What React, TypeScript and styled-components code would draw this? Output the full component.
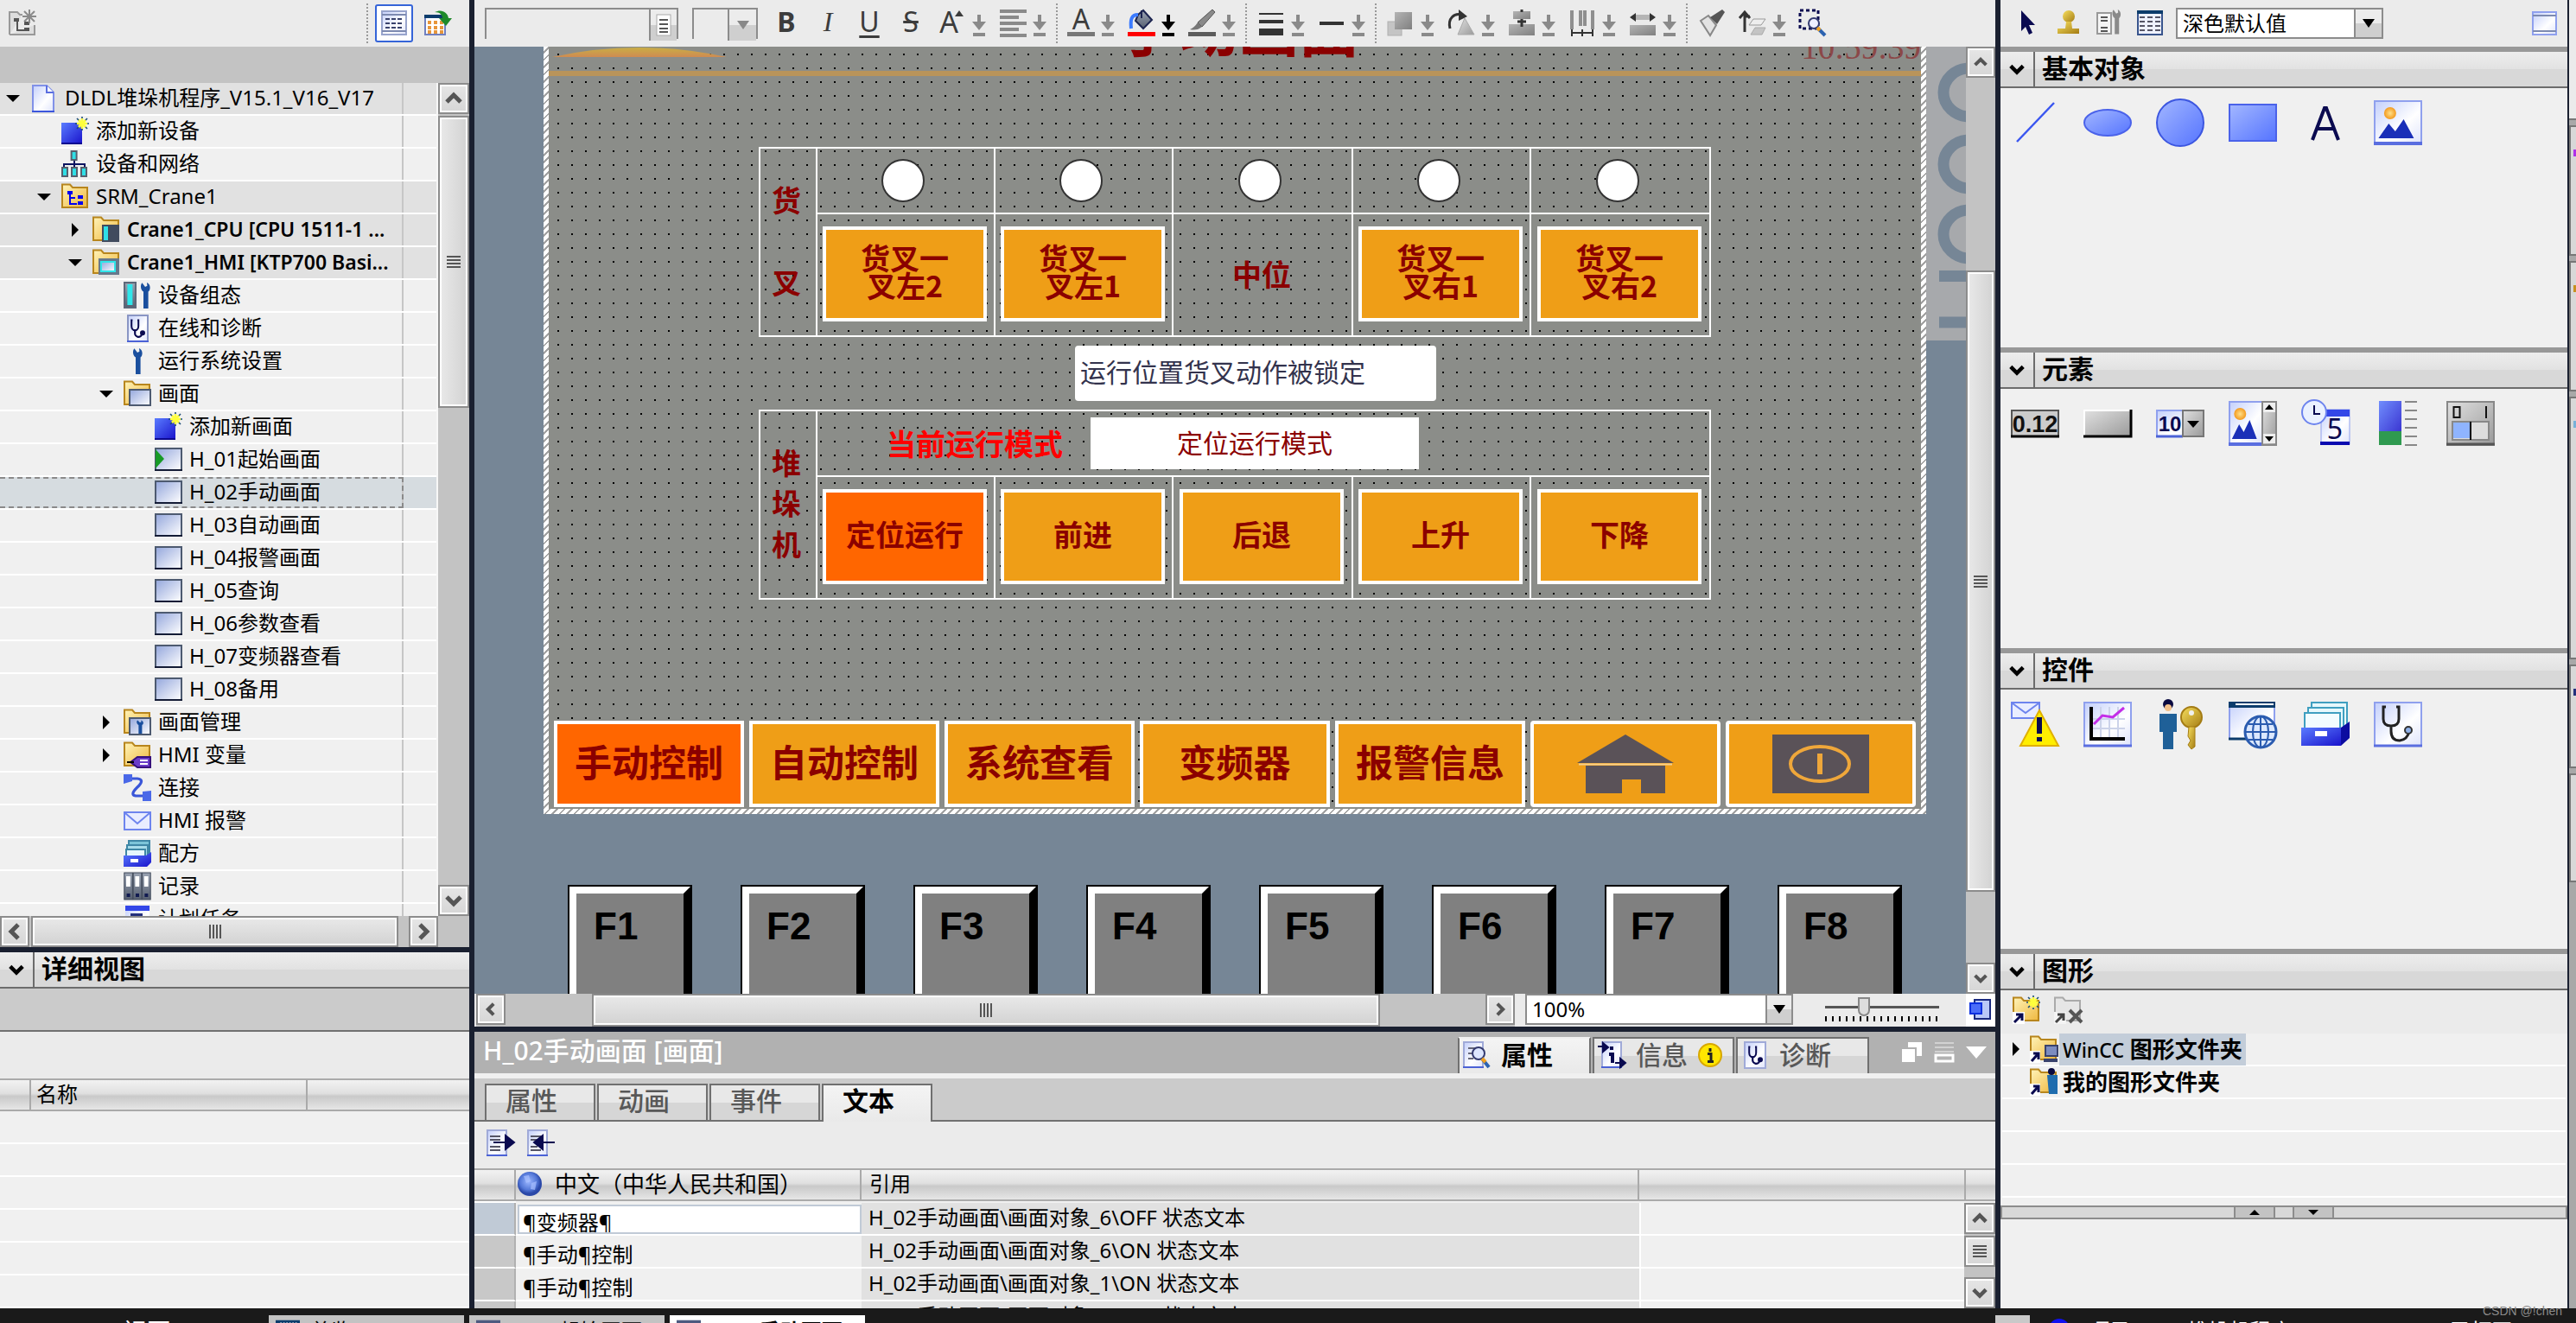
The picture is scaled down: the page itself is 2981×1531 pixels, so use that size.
import React from 'react';
import styled, { createGlobalStyle, css } from 'styled-components';

const Global = createGlobalStyle`
  *, *::before, *::after { box-sizing: border-box; }
  body { margin: 0; overflow: hidden; background: #1a2030; }
  body, button, input, select, table {
    font-family: "Noto Sans", "Noto Sans CJK SC", sans-serif;
    font-size: 24px;
    line-height: 36px;
    color: #000;
  }
  button { border: 0; padding: 0; margin: 0; background: none; }
  h2, ul { margin: 0; padding: 0; font-weight: inherit; }
  svg { display: block; flex: none; overflow: visible; }
`;

/* ---------- shared colours ---------- */
const edge = '#8c8c8c';
const navy = '#1a2030';
const track = '#c3c3c3';
const maroon = '#8b0000';

/* ---------- frame ---------- */
const Shell = styled.div`
  display: flex;
  flex-direction: column;
  height: 100vh;
`;
const Workspace = styled.div`
  flex: 1;
  min-height: 0;
  display: grid;
  grid-template-columns: 543px minmax(0, 1fr) 666px;
  column-gap: 6px;
  background: ${navy};
`;
const Column = styled.section`
  display: flex;
  flex-direction: column;
  min-width: 0;
  min-height: 0;
`;
const Divider = styled.div`
  height: 6px;
  flex: none;
  background: ${navy};
`;
const Bar = styled.div<{ $pad?: string; $h?: number; $gap?: number }>`
  flex: none;
  height: ${p => p.$h || 54}px;
  display: flex;
  align-items: center;
  gap: ${p => p.$gap || 0}px;
  padding: ${p => p.$pad || '0 10px'};
  background: #ebebeb;
`;
const Spacer = styled.div`
  flex: 1;
`;
const IconButton = styled.button<{ $active?: boolean }>`
  display: flex;
  align-items: center;
  justify-content: center;
  flex: none;
  min-width: 32px;
  height: 36px;
  ${p => p.$active && css`
    width: 44px;
    height: 44px;
    background: #fff;
    border: 2px solid #3564d8;
    border-radius: 3px;
  `}
`;
const DotRule = styled.div<{ $gap?: number }>`
  flex: none;
  width: 2px;
  height: 46px;
  margin: 0 ${p => p.$gap ?? 12}px 0 11px;
  background: repeating-linear-gradient(#999 0 2px, transparent 2px 4px);
`;

/* ---------- scroll bars ---------- */
const VBar = styled.div<{ $w?: number }>`
  flex: none;
  width: ${p => p.$w || 36}px;
  display: flex;
  flex-direction: column;
  gap: 2px;
  background: ${track};
`;
const HBar = styled.div`
  flex: 1;
  display: flex;
  gap: 2px;
  background: ${track};
`;
const raised = css`
  border: 2px solid ${edge};
  box-shadow: inset 0 0 0 2px #fff;
  display: flex;
  align-items: center;
  justify-content: center;
`;
const ScrollButton = styled.button`
  ${raised}
  flex: none;
  width: 34px;
  height: 36px;
  background: linear-gradient(#e6e6e6, #d6d6d6);
  ${VBar} & { width: 100%; }
`;
const VThumb = styled.div<{ $grow: number }>`
  ${raised}
  flex: ${p => p.$grow} 0 0;
  background: linear-gradient(90deg, #e9e9e9, #d2d2d2);
`;
const HThumb = styled.div<{ $grow: number }>`
  ${raised}
  flex: ${p => p.$grow} 0 0;
  background: linear-gradient(#e9e9e9, #d2d2d2);
`;
const Rest = styled.div<{ $grow: number }>`
  flex: ${p => p.$grow} 0 0;
`;
const GripV = styled.div`
  width: 16px;
  height: 14px;
  background: repeating-linear-gradient(#555 0 2px, transparent 2px 4px);
`;
const GripH = styled.div`
  width: 14px;
  height: 16px;
  background: repeating-linear-gradient(90deg, #555 0 2px, transparent 2px 4px);
`;
const arrowPath: Record<string, string> = {
  up: 'M2 14L10 6L18 14',
  down: 'M2 6L10 14L18 6',
  left: 'M14 2L6 10L14 18',
  right: 'M6 2L14 10L6 18',
};
const Arrow = ({ dir, color = '#555', size = 20 }: { dir: string; color?: string; size?: number }) => (
  <svg width={size} height={size} viewBox="0 0 20 20">
    <path d={arrowPath[dir]} fill="none" stroke={color} strokeWidth="5" />
  </svg>
);

/* ---------- icons ---------- */
const Defs = styled.svg`
  position: absolute;
`;
const Gradients = () => (
  <Defs width="0" height="0" aria-hidden="true">
    <defs>
      <linearGradient id="page" x1="0" y1="0" x2="1" y2="1"><stop offset="0" stopColor="#c3cffb" /><stop offset=".6" stopColor="#fff" /><stop offset="1" stopColor="#dfe4fb" /></linearGradient>
      <linearGradient id="screen" x1="0" y1="0" x2="1" y2="1"><stop offset="0" stopColor="#93a6dc" /><stop offset="1" stopColor="#fff" /></linearGradient>
      <linearGradient id="folder" x1="0" y1="0" x2="1" y2="1"><stop offset="0" stopColor="#fff3b8" /><stop offset="1" stopColor="#efb83f" /></linearGradient>
      <linearGradient id="blue" x1="0" y1="0" x2="1" y2="1"><stop offset="0" stopColor="#5a7cff" /><stop offset="1" stopColor="#1a14cc" /></linearGradient>
      <linearGradient id="soft" x1="0" y1="0" x2="1" y2="1"><stop offset="0" stopColor="#a3b7ff" /><stop offset="1" stopColor="#5574ff" /></linearGradient>
      <linearGradient id="grey" x1="0" y1="0" x2="1" y2="1"><stop offset="0" stopColor="#e0e0e0" /><stop offset="1" stopColor="#9a9a9a" /></linearGradient>
      <linearGradient id="mid" x1="0" y1="0" x2="1" y2="1"><stop offset="0" stopColor="#b4b4b4" /><stop offset="1" stopColor="#808080" /></linearGradient>
      <linearGradient id="steel" x1="0" y1="0" x2="0" y2="1"><stop offset="0" stopColor="#9ba4b3" /><stop offset="1" stopColor="#565f70" /></linearGradient>
      <linearGradient id="gold" x1="0" y1="0" x2="1" y2="1"><stop offset="0" stopColor="#f7df5e" /><stop offset="1" stopColor="#a47c14" /></linearGradient>
      <radialGradient id="sun"><stop offset="0" stopColor="#ffe08a" /><stop offset="1" stopColor="#f39a1e" /></radialGradient>
      <radialGradient id="globe" cx=".45" cy=".4"><stop offset="0" stopColor="#9db8ff" /><stop offset=".7" stopColor="#5478d8" /><stop offset="1" stopColor="#2a48a8" /></radialGradient>
      <linearGradient id="logo" x1="0" y1="0" x2="0" y2="1"><stop offset="0" stopColor="#c9ae45" /><stop offset="1" stopColor="#cf8b52" /></linearGradient>
    </defs>
  </Defs>
);
const I16 = ({ children, size = 32 }: { children: React.ReactNode; size?: number }) => (
  <svg width={size} height={size} viewBox="0 0 16 16" aria-hidden="true">{children}</svg>
);
const FolderBase = () => (
  <path d="M.5 14V.8H5L6.5 2.5H15V14Z" fill="url(#folder)" stroke="#b8861d" />
);
const wrench = 'M8.2 .6L10 3L11.2 2.4L11 .5C13.4 1.5 13.2 5 11.8 5.8V15.5H9V5.8C7.4 4.8 7 2 8.2 .6Z';
const Steth = () => (
  <g fill="none" stroke="#0a0a50">
    <path d="M5.2 3.2H4.6V6.6A1.9 2.4 0 0 0 8.6 6.6V3.2H8" strokeWidth="1" />
    <path d="M6.6 8.8V10.6A2 2 0 0 0 10.6 11.2" strokeWidth="1.1" />
    <circle cx="11" cy="10.6" r="1" fill="#0a0a50" />
  </g>
);
const Spark = ({ x = 12, y = 3.5 }: { x?: number; y?: number }) => (
  <g transform={`translate(${x} ${y})`}>
    <path d="M0 -4V4M-4 0H4M-3 -3L3 3M3 -3L-3 3" stroke="#1d4d78" strokeWidth=".8" />
    <path d="M0 -3V3M-3 0H3M-2 -2L2 2M2 -2L-2 2" stroke="#ffff3c" strokeWidth="1.3" />
  </g>
);
const TreeIcon = ({ kind }: { kind: string }) => {
  switch (kind) {
    case 'project': return <I16><path d="M2 .5H9.5L13.5 4.5V15.5H1.5V.5Z" fill="url(#page)" stroke="#8191e8" /><path d="M9.5 .5V4.5H13.5" fill="#fff" stroke="#5a6ee0" /><path d="M1 15.5H14" stroke="#3c56dc" /></I16>;
    case 'add': return <I16><rect x="0" y="3" width="12" height="12" fill="url(#blue)" /><path d="M0 15H12" stroke="#0c0890" /><Spark /></I16>;
    case 'network': return <I16><path d="M7.5 5V8M1.5 10V8H13.5V10M7.5 8V10" fill="none" stroke="#0c1460" /><g fill="#2fdfe6" stroke="#55606e"><rect x="5.8" y=".5" width="3" height="5" /><rect x=".5" y="10" width="3" height="5" /><rect x="6" y="10" width="3" height="5" /><rect x="11.5" y="10" width="3" height="5" /></g></I16>;
    case 'plc': return <I16><FolderBase /><g fill="#0000f0"><rect x="3.5" y="4.5" width="3" height="2" /><rect x="9.5" y="7" width="3" height="2" /><rect x="9.5" y="10.5" width="3" height="2" /></g><path d="M5 6V12H9M5 8.5H8" stroke="#0000f0" fill="none" /></I16>;
    case 'cpu': return <I16><FolderBase /><rect x="5.5" y="5" width="10" height="10" fill="#414b5e" /><rect x="6.5" y="6" width="2.5" height="8" fill="#2fdfe6" /></I16>;
    case 'hmi': return <I16><FolderBase /><rect x="3.5" y="5.5" width="12" height="9.5" fill="#66788c" /><rect x="5" y="7.5" width="8" height="5.5" fill="url(#screen)" stroke="#2fe6ea" /></I16>;
    case 'config': return <I16><rect x=".5" y=".5" width="6.5" height="14.5" fill="url(#steel)" stroke="#5d6879" /><rect x="2.2" y="1.5" width="3" height="12" fill="#2fe6ea" /><path d={wrench} transform="translate(2.5 0)" fill="#1a4f9e" /></I16>;
    case 'diag': return <I16><rect x="2.5" y=".5" width="11.5" height="15" fill="url(#page)" stroke="#8a96c4" /><Steth /><path d="M2 15.5H14.5" stroke="#4b62d6" /></I16>;
    case 'wrench': return <I16><path d={wrench} transform="translate(-2 0)" fill="#1a4f9e" /></I16>;
    case 'screens': return <I16><FolderBase /><rect x="3.5" y="5.5" width="12" height="9" fill="url(#screen)" stroke="#4d5a70" /></I16>;
    case 'start': return <I16><rect x=".5" y="1.5" width="15" height="12.5" fill="url(#screen)" stroke="#4d5a70" /><path d="M.5 2L5.5 7.5L.5 13Z" fill="#179a26" /><path d="M0 14H16" stroke="#141c36" /></I16>;
    case 'screen': return <I16><rect x=".5" y="1.5" width="15" height="12.5" fill="url(#screen)" stroke="#4d5a70" /><path d="M0 14H16" stroke="#141c36" /></I16>;
    case 'manage': return <I16><FolderBase /><rect x="3.5" y="5.5" width="12" height="9.5" fill="url(#screen)" stroke="#4d5a70" /><path d={wrench} transform="translate(2.2 6.5) scale(.72 .52)" fill="#1a4f9e" /></I16>;
    case 'tags': return <I16><FolderBase /><path d="M4 12L8 9H15.5V15H8Z" fill="#6a3cc8" stroke="#36107c" /><path d="M9.5 11H14M9.5 13H14" stroke="#fff" /><path d="M2 12H6" stroke="#000" /></I16>;
    case 'conn': return <I16><path d="M4 2.5H8Q12 3 9 6.5Q3 12 7 12.5H11" fill="none" stroke="#3a56d8" strokeWidth="1.6" /><path d="M0 0H5V4L0 5.5ZM11 10L16 9.5V15.5H11Z" fill="#4a68e8" /></I16>;
    case 'mail': return <I16><rect x=".5" y="3" width="15" height="10" fill="#e9edff" stroke="#6d84ee" /><path d="M1 3.5L8 9.5L15 3.5" fill="none" stroke="#6d84ee" /></I16>;
    case 'recipe': return <I16><path d="M3 .5H15V9H3Z" fill="#7cc4d8" stroke="#3f87a6" /><path d="M2 3H14V10H2Z" fill="#a7dcea" stroke="#3f87a6" /><path d="M1.5 5.5H12.5V10H1.5Z" fill="#e6f8fc" stroke="#3f87a6" /><path d="M0 9H13L16 7V13L13.5 15.5H0Z" fill="url(#blue)" /><rect x="4" y="11" width="4.5" height="2" fill="#fff" /></I16>;
    case 'log': return <I16>{[0, 5.2, 10.4].map(x => <g key={x}><rect x={x + .4} y="0" width="4.8" height="15.5" fill="url(#steel)" stroke="#3d4658" strokeWidth=".5" /><rect x={x + 1.5} y="2" width="2.4" height="6" fill="#fff" /><rect x={x + 1.8} y="12" width="2" height="2" fill="#101a50" /></g>)}</I16>;
    case 'task': return <I16><rect x="1" y="0" width="14" height="16" fill="url(#page)" /><rect x="1" y="0" width="14" height="3" fill="#3347e8" /><path d="M5 16V5.5H10V16" fill="none" stroke="#24307c" strokeWidth="2" /></I16>;
    default: return null;
  }
};
const Page = ({ children }: { children?: React.ReactNode }) => (
  <><rect x=".5" y=".5" width="11" height="14.5" fill="url(#page)" stroke="#a0aad8" /><path d="M0 15H12" stroke="#4b62d6" />{children}</>
);

/* ---------- project tree ---------- */
const Strip = styled.div<{ $h: number; $bg: string; $line?: boolean }>`
  flex: none;
  height: ${p => p.$h}px;
  background: ${p => p.$bg};
  ${p => p.$line && 'border-bottom: 2px solid #707070;'}
`;
const TreeArea = styled.div`
  flex: 1;
  min-height: 0;
  display: flex;
  background: #f0f0f0;
`;
const Tree = styled.ul`
  flex: 1;
  min-width: 0;
  overflow: hidden;
  list-style: none;
  border-right: 2px solid #f7f7f7;
`;
const TreeRow = styled.li<{ $level: number; $dark?: boolean; $sel?: boolean; $bold?: boolean }>`
  position: relative;
  display: grid;
  grid-template-columns: 35px 32px minmax(0, 1fr) 40px;
  align-items: center;
  height: 38px;
  padding-left: ${p => p.$level * 36}px;
  border-bottom: 2px solid #fff;
  background: ${p => (p.$dark ? '#e1e1e1' : p.$sel ? '#d6dce0' : '#f0f0f0')};
  ${p => p.$sel && css`
    &::after {
      content: '';
      position: absolute;
      inset: 0 38px 0 0;
      border: 2px dashed #8a8a8a;
      border-left: 0;
    }
  `}
  ${p => p.$bold && css`font-weight: 600; font-size: 23px;`}
`;
const Twist = styled.span`
  display: flex;
  justify-content: center;
  padding-right: 5px;
`;
const TreeLabel = styled.span`
  height: 36px;
  padding-left: 8px;
  line-height: 34px;
  white-space: nowrap;
  overflow: hidden;
`;
const TreeEnd = styled.span`
  height: 36px;
  border-left: 2px solid #c6c6c6;
`;
const HRow = styled.div`
  flex: none;
  display: flex;
  height: 36px;
  background: ${track};
`;
const Corner = styled.div`
  width: 36px;
  flex: none;
`;
const Triangle = ({ open }: { open?: boolean }) => (
  <svg width="16" height="16" viewBox="0 0 16 16"><path d={open ? 'M0 4H16L8 12Z' : 'M4 0V16L12 8Z'} /></svg>
);
type Node = { l: number; k: string; t: string; o?: boolean; c?: boolean; d?: boolean; b?: boolean; s?: boolean };
const nodes: Node[] = [
  { l: 0, k: 'project', t: 'DLDL堆垛机程序_V15.1_V16_V17', o: true, d: true },
  { l: 1, k: 'add', t: '添加新设备' },
  { l: 1, k: 'network', t: '设备和网络' },
  { l: 1, k: 'plc', t: 'SRM_Crane1', o: true, d: true },
  { l: 2, k: 'cpu', t: 'Crane1_CPU [CPU 1511-1 ...', c: true, d: true, b: true },
  { l: 2, k: 'hmi', t: 'Crane1_HMI [KTP700 Basi...', o: true, d: true, b: true },
  { l: 3, k: 'config', t: '设备组态' },
  { l: 3, k: 'diag', t: '在线和诊断' },
  { l: 3, k: 'wrench', t: '运行系统设置' },
  { l: 3, k: 'screens', t: '画面', o: true },
  { l: 4, k: 'add', t: '添加新画面' },
  { l: 4, k: 'start', t: 'H_01起始画面' },
  { l: 4, k: 'screen', t: 'H_02手动画面', s: true },
  { l: 4, k: 'screen', t: 'H_03自动画面' },
  { l: 4, k: 'screen', t: 'H_04报警画面' },
  { l: 4, k: 'screen', t: 'H_05查询' },
  { l: 4, k: 'screen', t: 'H_06参数查看' },
  { l: 4, k: 'screen', t: 'H_07变频器查看' },
  { l: 4, k: 'screen', t: 'H_08备用' },
  { l: 3, k: 'manage', t: '画面管理', c: true },
  { l: 3, k: 'tags', t: 'HMI 变量', c: true },
  { l: 3, k: 'conn', t: '连接' },
  { l: 3, k: 'mail', t: 'HMI 报警' },
  { l: 3, k: 'recipe', t: '配方' },
  { l: 3, k: 'log', t: '记录' },
  { l: 3, k: 'task', t: '计划任务' },
];

/* ---------- section headers ---------- */
const Section = styled.header<{ $bar?: boolean }>`
  flex: none;
  display: flex;
  height: ${p => (p.$bar ? 48 : 42)}px;
  border-top: ${p => (p.$bar ? 6 : 0)}px solid #989898;
  border-bottom: 2px solid #6c6c6c;
  background: linear-gradient(#ededed 0, #e2e2e2 50%, #d8d8d8 50%, #d8d8d8 100%);
`;
const Fold = styled.button`
  width: 40px;
  display: flex;
  align-items: center;
  justify-content: center;
  border-right: 2px solid #6c6c6c;
`;
const SectionTitle = styled.h2`
  font-size: 30px;
  line-height: 38px;
  font-weight: 700;
  padding-left: 8px;
`;
const Head = ({ title, bar }: { title: string; bar?: boolean }) => (
  <Section $bar={bar}>
    <Fold aria-label={title}><Arrow dir="down" color="#000" size={18} /></Fold>
    <SectionTitle>{title}</SectionTitle>
  </Section>
);

/* ---------- data tables ---------- */
const headFill = 'linear-gradient(#f2f2f2, #e0e0e0 45%, #c9c9c9 55%, #e6e6e6)';
const Grid = styled.table`
  flex: 1;
  min-width: 0;
  width: 100%;
  table-layout: fixed;
  border-collapse: separate;
  border-spacing: 0;
  th, td { padding: 0 0 0 9px; text-align: left; white-space: nowrap; overflow: hidden; }
  th {
    height: 38px;
    font-weight: 400;
    line-height: 32px;
    padding-bottom: 2px;
    background: ${headFill};
    border: 2px solid #aaa;
    border-left: 0;
  }
  th:last-child { border-right: 0; }
  td { height: 38px; border-bottom: 2px solid #fff; background: #f0f0f0; }
`;
const DetailGrid = styled(Grid)`
  flex: none;
  th:nth-child(2) { padding-left: 6px; }
`;
const Clip = styled.div`
  flex: none;
  height: 266px;
  overflow: hidden;
  background: #f0f0f0;
`;

/* ---------- format tool bar ---------- */
const Combo = styled.div<{ $w: number; $btn: number }>`
  flex: none;
  display: grid;
  grid-template-columns: minmax(0, 1fr) ${p => p.$btn}px;
  width: ${p => p.$w}px;
  height: 36px;
  border: 2px solid ${edge};
`;
const ComboPair = styled.div`
  display: flex;
  gap: 16px;
`;
const ComboInput = styled.input`
  width: 100%;
  border: 0;
  border-right: 2px solid ${edge};
  background: #ebebeb;
  padding: 0 4px;
`;
const ComboSelect = styled.select`
  appearance: none;
  width: 100%;
  border: 0;
  border-right: 2px solid ${edge};
  border-radius: 0;
  background: #fff;
  padding: 0 6px;
  line-height: 30px;
  outline: 0;
`;
const ComboButton = styled.button`
  display: flex;
  align-items: center;
  justify-content: center;
  background: linear-gradient(#ececec 50%, #cfcfcf 50%);
`;
const Down = ({ color = '#000', size = 14 }: { color?: string; size?: number }) => (
  <svg width={size} height="10" viewBox="0 0 14 10"><path d="M0 0H14L7 10Z" fill={color} /></svg>
);
const Letters = styled.div`
  display: flex;
  gap: 16px;
  margin: 0 16px 0 17px;
`;
const Letter = styled(IconButton)<{ $kind: string }>`
  width: 32px;
  font-size: 32px;
  line-height: 36px;
  padding-bottom: 4px;
  color: #3c3c3c;
  ${p => p.$kind === 'B' && 'font-weight: 700;'}
  ${p => p.$kind === 'I' && 'font-family: "Liberation Serif", serif; font-style: italic;'}
  ${p => p.$kind === 'U' && 'text-decoration: underline; text-underline-offset: 4px;'}
  ${p => p.$kind === 'S' && 'text-decoration: line-through;'}
`;
const ToolGroup = styled.div`
  display: flex;
  gap: 15px;
`;
const Tool = styled.button`
  display: flex;
  align-items: center;
  gap: 7px;
`;
const More = ({ color = '#8a8a8a' }: { color?: string }) => (
  <svg width="16" height="32" viewBox="0 0 16 32"><path d="M6 6H10V14H16L8 24L0 14H6ZM1 27H15V31H1Z" fill={color} /></svg>
);
const T = ({ children }: { children: React.ReactNode }) => (
  <svg width="32" height="32" viewBox="0 0 32 32" aria-hidden="true">{children}</svg>
);
const glyphA = (size: number, x: number, y: number, fill = '#3c3c3c') => (
  <text x={x} y={y} fontSize={size} fill={fill} fontFamily="Noto Sans, sans-serif" textAnchor="middle">A</text>
);
const toolIcons: Record<string, React.ReactNode> = {
  grow: <T>{glyphA(34, 12, 27)}<path d="M19 8L24 1L29 8Z" fill="#3c3c3c" /></T>,
  align: <T>{[1, 8, 15, 22, 29].map((y, i) => <rect key={y} x="1" y={y - 1} width={i % 2 ? 22 : 31} height="4" fill="#8a8a8a" />)}</T>,
  color: <T>{glyphA(32, 16, 23)}<rect x="0" y="26" width="32" height="5" fill="#777" /></T>,
  fill: <T><path d="M12 6L18 1L28 12L18 22L9 13Z" fill="url(#steel)" stroke="#1c2450" strokeWidth="2" /><path d="M12 6C4 6 3 12 4 22" fill="none" stroke="#3b7bff" strokeWidth="4" /><path d="M16 10V1" stroke="#1c2450" strokeWidth="2" /><rect x="0" y="26" width="32" height="5" fill="#f00" /></T>,
  pen: <T><path d="M28 0L31 3L16 20L11 15Z" fill="#8a8a8a" stroke="#555" /><path d="M11 15L16 20Q10 25 2 23Q7 21 11 15Z" fill="#777" /><rect x="0" y="26" width="32" height="5" fill="#5c5c5c" /></T>,
  width: <T><path d="M2 5H30" stroke="#333" strokeWidth="2" /><path d="M2 14H30" stroke="#333" strokeWidth="4" /><path d="M2 26H30" stroke="#333" strokeWidth="8" /></T>,
  style: <T><path d="M2 16H30" stroke="#333" strokeWidth="4" /></T>,
  order: <T><rect x="1" y="14" width="16" height="16" fill="#c4c4c4" stroke="#b0b0b0" /><rect x="9" y="3" width="20" height="20" fill="url(#mid)" /></T>,
  rotate: <T><path d="M3 22C0 10 8 4 16 6" fill="none" stroke="#333" strokeWidth="3" /><path d="M13 0L23 8L13 13Z" fill="#333" /><path d="M20 10L31 29H12Z" fill="url(#grey)" stroke="#aaa" /></T>,
  center: <T><rect x="6" y="2" width="20" height="9" fill="url(#mid)" /><rect x="1" y="17" width="30" height="13" fill="url(#mid)" /><path d="M16 0V3M11 14H21M16 11V20" stroke="#333" strokeWidth="3" /></T>,
  spread: <T><path d="M4 1V23M14 1V19M19 1V19M28 1V23" stroke="#8f8f8f" strokeWidth="4" /><path d="M3 27H29M4 23V31M16 23V31M28 23V31" stroke="#333" strokeWidth="2" /></T>,
  size: <T><path d="M1 9L8 4V14ZM31 9L24 4V14Z" fill="#333" /><rect x="8" y="6" width="16" height="6" fill="#b5b5b5" /><rect x="1" y="18" width="30" height="12" fill="url(#mid)" /></T>,
  brush: <T><path d="M3 13L12 7L21 18L14 30Z" fill="#e2e2e2" stroke="#888" strokeWidth="2" /><path d="M28 0L31 3L22 17L14 9Z" fill="#555" /></T>,
  layer: <T><path d="M7 4V26M1 10L7 3L13 10M7 8H13" fill="none" stroke="#333" strokeWidth="3" /><path d="M17 11H31L26 18H12Z" fill="#eee" stroke="#999" /><path d="M19 21H31L27 29H14Z" fill="#c4c4c4" stroke="#aaa" /></T>,
  region: <T><rect x="1" y="1" width="21" height="21" fill="none" stroke="#0a0a50" strokeWidth="3" strokeDasharray="4 3" /><circle cx="17" cy="16" r="6" fill="#eef" stroke="#333a70" strokeWidth="2" /><path d="M21 21L30 30" stroke="#2b62b0" strokeWidth="4" /><path d="M21 21L24 24" stroke="#f0a020" strokeWidth="4" /></T>,
};
const ToolSet = ({ names, dark }: { names: string[]; dark?: string }) => (
  <ToolGroup>
    {names.map(n => (
      <Tool key={n} aria-label={n}>{toolIcons[n]}<More color={n === dark ? '#000' : undefined} /></Tool>
    ))}
  </ToolGroup>
);

/* ---------- operator panel ---------- */
const CanvasRow = styled.div`
  flex: 1;
  min-height: 0;
  display: flex;
`;
const Canvas = styled.div`
  flex: 1;
  min-width: 0;
  display: flex;
  flex-direction: column;
  overflow: hidden;
  background: #768696;
`;
const PanelRow = styled.div`
  flex: none;
  display: flex;
  padding-left: 80px;
  height: 888px;
`;
const Hatch = styled.div`
  flex: 1;
  min-width: 0;
  display: flex;
  padding: 0 6px 6px;
  background: repeating-linear-gradient(135deg, #fff 0 4px, #a2a2a2 4px 6px);
`;
const Panel = styled.div`
  flex: 1;
  min-width: 0;
  display: flex;
  flex-direction: column;
  align-items: center;
  background-color: #8b8d89;
  background-image: conic-gradient(from 0deg at 2px 2px, transparent 270deg, #000 0);
  background-size: 16px 16px;
  background-position: 10px 8px;
  font-family: "Noto Sans CJK SC", sans-serif;
`;
const PanelTop = styled.div`
  align-self: stretch;
  flex: none;
  height: 28px;
  overflow: hidden;
  display: grid;
  grid-template-columns: 1fr auto 1fr;
  grid-template-rows: 28px;
  align-items: end;
  padding-left: 4px;
`;
const PanelTitle = styled.div`
  font-size: 70px;
  line-height: 68px;
  font-weight: 700;
  color: ${maroon};
  padding: 0 0 18px 4px;
`;
const Clock = styled.div`
  justify-self: end;
  font-family: "Liberation Serif", serif;
  font-size: 39px;
  line-height: 38px;
  color: #8b4848;
  padding-bottom: 8px;
`;
const LogoArc = styled.div`
  align-self: start;
`;
const Rule = styled.div`
  align-self: stretch;
  flex: none;
  height: 6px;
  background: #b9945a;
  margin-bottom: 82px;
`;
const Block = styled.div`
  flex: none;
  display: grid;
  grid-template-columns: 66px minmax(0, 1fr);
  width: 1102px;
  height: 220px;
  border: 2px solid #fff;
`;
const SideLabel = styled.div<{ $gap: number }>`
  display: flex;
  flex-direction: column;
  align-items: center;
  justify-content: center;
  gap: ${p => p.$gap}px;
  border-right: 2px solid #fff;
  padding: 0 4px 4px 0;
  font-size: 34px;
  line-height: 34px;
  font-weight: 700;
  color: ${maroon};
`;
const Cells = styled.div`
  display: grid;
  grid-template-columns: 204fr 206fr 208fr 206fr 208fr;
  grid-template-rows: 76px 140px;
`;
const Cell = styled.div<{ $top?: boolean }>`
  display: flex;
  align-items: center;
  justify-content: center;
  border-left: 2px solid #fff;
  border-bottom: ${p => (p.$top ? '2px solid #fff' : '0')};
  padding: ${p => (p.$top ? '0 6px 0 0' : '0 2px 2px 0')};
  font-size: 34px;
  line-height: 32px;
  font-weight: 700;
  color: ${maroon};
  &:nth-child(5n + 1) { border-left: 0; }
`;
const ModeCell = styled.div`
  grid-column: 1 / -1;
  display: flex;
  align-items: center;
  border-bottom: 2px solid #fff;
  padding-left: 80px;
`;
const ModeCells = styled(Cells)`
  ${Cell}:nth-child(2) { border-left: 0; }
  ${Cell}:nth-child(6) { border-left: 2px solid #fff; }
`;
const ModeLabel = styled.label`
  width: 236px;
  font-size: 34px;
  font-weight: 700;
  color: #f00;
`;
const ModeValue = styled.output`
  width: 380px;
  height: 60px;
  background: #fff;
  font-size: 30px;
  line-height: 56px;
  text-align: center;
  color: ${maroon};
`;
const Lamp = styled.span`
  width: 50px;
  height: 50px;
  border-radius: 50%;
  background: #fff;
  border: 2px solid #333;
`;
const HmiButton = styled.button<{ $on?: boolean; $round?: boolean }>`
  border: 4px solid #fff;
  border-radius: ${p => (p.$round ? 4 : 0)}px;
  background: ${p => (p.$on ? '#ff6600' : '#ef9e17')};
  color: ${maroon};
  font-family: "Noto Sans CJK SC", sans-serif;
  font-weight: 700;
  display: flex;
  align-items: center;
  justify-content: center;
`;
const CellButton = styled(HmiButton)`
  width: 190px;
  height: 110px;
  font-size: 34px;
  line-height: 32px;
  padding: 0 38px 6px;
  ${ModeCells} & { padding: 0 0 6px; }
`;
const MessageRow = styled.div`
  flex: none;
  width: 1102px;
  padding: 10px 0 10px 366px;
`;
const Message = styled.output`
  display: block;
  width: 418px;
  border-radius: 4px;
  background: #fff;
  color: #33334d;
  font-size: 30px;
  line-height: 58px;
  height: 64px;
  padding-left: 6px;
`;
const NavRow = styled.div`
  align-self: stretch;
  margin-top: auto;
  display: grid;
  grid-template-columns: repeat(7, minmax(0, 1fr));
  gap: 6px;
  padding: 0 6px 2px;
`;
const NavButton = styled(HmiButton)`
  height: 100px;
  font-size: 43px;
  line-height: 48px;
  padding-bottom: ${p => (p.$round ? 0 : 8)}px;
`;
const Bezel = styled.div`
  flex: none;
  width: 46px;
  height: 340px;
  overflow: hidden;
  background: #a7a9ac;
`;
const KeyRow = styled.div`
  flex: 1;
  min-height: 0;
  display: grid;
  grid-template-columns: repeat(8, minmax(0, 1fr));
  padding: 82px 18px 0 108px;
`;
const KeyCap = styled.button`
  width: 144px;
  height: 140px;
  border: 2px solid #000;
  display: flex;
`;
const KeyFace = styled.span`
  flex: 1;
  align-self: stretch;
  border: 8px solid;
  border-color: #fff #000 #000 #fff;
  background: #808080;
  font: 700 44px/44px "Liberation Sans", sans-serif;
  text-align: left;
  padding: 16px 0 0 20px;
`;
const LogoSvg = () => (
  <svg width="202" height="12" viewBox="0 0 202 12"><path d="M0 12Q100 -10 202 12Z" fill="url(#logo)" /></svg>
);
const House = () => (
  <svg width="112" height="68" viewBox="0 0 112 68"><g fill="#5a5258"><path d="M56 0L112 33H0Z" /><path d="M10 36H102V68H74V52H52V68H10Z" /></g><path d="M2 34.500H110" stroke="#f6cf8e" strokeWidth="2" /></svg>
);
const Power = () => (
  <svg width="112" height="68" viewBox="0 0 112 68"><rect width="112" height="68" fill="#5a5258" /><ellipse cx="55" cy="34" rx="34" ry="20" fill="none" stroke="#efa73a" strokeWidth="4" /><rect x="52" y="22" width="6" height="24" fill="#efa73a" /></svg>
);
const BezelArt = () => (
  <svg width="46" height="340" viewBox="0 0 46 340"><g fill="none" stroke="#768696" strokeWidth="13">{[53, 136, 217].map(y => <ellipse key={y} cx="50" cy={y} rx="30" ry="28" />)}<path d="M15 265.500H46M15 319H46" /></g></svg>
);

/* ---------- canvas footer ---------- */
const Footer = styled.div`
  flex: none;
  display: flex;
  height: 38px;
  padding-left: 2px;
  background: #ebebeb;
`;
const ZoomCombo = styled(Combo)`
  margin-left: 12px;
`;
const ZoomBox = styled.div`
  width: 200px;
  display: flex;
  flex-direction: column;
  align-items: center;
  padding-left: 6px;
`;
const Range = styled.input`
  appearance: none;
  width: 132px;
  height: 26px;
  margin: 2px 0 0;
  background: linear-gradient(#555, #555) 0 12px / 100% 3px no-repeat;
  &::-webkit-slider-thumb {
    appearance: none;
    width: 14px;
    height: 22px;
    background: #ddd;
    border: 2px solid #888;
    border-radius: 0 0 7px 7px;
  }
`;
const Ticks = styled.div`
  width: 132px;
  height: 6px;
  margin-top: -2px;
  background: repeating-linear-gradient(90deg, #000 0 2px, transparent 2px 8px);
`;
const Fit = styled(IconButton)`
  width: 34px;
  height: 38px;
  background: #fff;
`;

/* ---------- inspector ---------- */
const InspectorHead = styled.div`
  flex: none;
  display: flex;
  align-items: flex-end;
  height: 54px;
  padding: 0 6px 0 10px;
  border-bottom: 6px solid #f0f0f0;
  background: #b1b1b1;
`;
const InspectorTitle = styled.h2`
  flex: 1;
  color: #fff;
  font-size: 30px;
  line-height: 40px;
  padding-bottom: 6px;
  font-weight: 500;
`;
const tabFace = css<{ $on?: boolean }>`
  display: flex;
  align-items: center;
  height: 42px;
  font-size: 30px;
  line-height: 36px;
  border: 2px solid #707070;
  border-bottom: 0;
  font-weight: ${p => (p.$on ? 700 : 500)};
  color: ${p => (p.$on ? '#000' : '#585858')};
  background: ${p => (p.$on ? 'linear-gradient(#f4f4f4, #e9e9e9)' : 'linear-gradient(#e8e8e8 50%, #d6d6d6 50%)')};
`;
const TopTab = styled.button<{ $on?: boolean; $w: number; $gap?: number }>`
  ${tabFace}
  width: ${p => p.$w}px;
  gap: ${p => p.$gap || 12}px;
  padding: 0 0 2px 4px;
  margin-right: 2px;
  ${p => p.$on && 'border-top-color: #f0f0f0;'}
`;
const WindowTools = styled.div`
  display: flex;
  gap: 5px;
  margin: 0 0 6px 32px;
`;
const SubTabs = styled.div`
  flex: none;
  display: flex;
  align-items: flex-end;
  gap: 2px;
  height: 50px;
  padding-left: 12px;
  background: linear-gradient(#707070, #707070) 0 100% / 100% 2px no-repeat #cbcbcb;
`;
const SubTab = styled.button<{ $on?: boolean }>`
  ${tabFace}
  width: 128px;
  margin-bottom: ${p => (p.$on ? 0 : 2)}px;
  height: ${p => (p.$on ? 44 : 42)}px;
  padding: 0 0 ${p => (p.$on ? 6 : 4)}px 22px;
`;
const TableArea = styled.div`
  flex: none;
  display: flex;
  align-items: flex-start;
  height: 162px;
  overflow: hidden;
  background: #f0f0f0;
`;
const TextGrid = styled(Grid)`
  tbody::before { content: ''; display: block; height: 2px; background: #fff; }
  td:first-child { background: #c8c8c8; border-right: 2px solid #b0b0b0; }
  tr:first-child td:first-child { background: #c0cad6; }
  td:nth-child(2) { padding: 8px 0 0 8px; line-height: 28px; }
  td:nth-child(3) { background: #e1e1e1; line-height: 32px; padding: 0 0 2px 8px; }
  td:last-child { border-left: 2px solid #fff; }
  tbody tr:first-child td:nth-child(2) { padding: 2px 0 0 2px; }
`;
const LangHead = styled.span`
  display: flex;
  align-items: center;
  gap: 14px;
  font-size: 26px;
  margin-left: -8px;
`;
const CellInput = styled.input`
  display: block;
  width: 100%;
  height: 34px;
  padding: 4px 0 0 4px;
  border: 2px solid #c0cad6;
  background: #fff;
  line-height: 26px;
`;
const ScrollSide = styled.div`
  flex: none;
  width: 36px;
  height: 162px;
  display: flex;
  flex-direction: column;
  gap: 2px;
`;
const ScrollCap = styled.div`
  flex: none;
  height: 38px;
  background: ${headFill};
  border: 2px solid #aaa;
  border-right: 0;
`;

/* ---------- toolbox ---------- */
const Palette = styled.div`
  flex: none;
  display: flex;
  align-items: flex-start;
  gap: 28px;
  height: 300px;
  padding: 12px;
  background: #f0f0f0;
`;
const PaletteItem = styled.button`
  width: 56px;
  height: 56px;
`;
const P = ({ children }: { children: React.ReactNode }) => (
  <PaletteItem><svg width="56" height="56" viewBox="0 0 56 56">{children}</svg></PaletteItem>
);
const Picture = ({ w = 54 }: { w?: number }) => (
  <><rect x="1" y="3" width={w} height="48" fill="url(#page)" stroke="#8fa0ee" strokeWidth="2" /><circle cx={w * .35} cy="17" r="7" fill="url(#sun)" /><path d={`M${w * .1} 46L${w * .32} 29L${w * .46} 38L${w * .64} 24L${w * .86} 46Z`} fill="#1a2fb8" /><path d={`M0 52H${w + 2}`} stroke="#5a6ee0" strokeWidth="4" /></>
);
const FileRow = styled.li`
  display: flex;
  align-items: center;
  height: 38px;
  border-bottom: 2px solid #fff;
  padding-left: 8px;
`;
const FileTwist = styled.span`
  width: 24px;
`;
const FileName = styled.span<{ $sel?: boolean }>`
  margin-left: 2px;
  padding: 0 4px;
  font-size: 26px;
  line-height: 36px;
  font-weight: 700;
  background: ${p => (p.$sel ? '#c3cdd9' : 'transparent')};
`;
const Latin = styled.span`
  font-weight: 500;
  font-size: 23px;
`;
const FileList = styled.ul`
  flex: none;
  list-style: none;
  padding: 0 2px;
  background: #f0f0f0;
`;
const Splitter = styled.div`
  flex: none;
  margin-top: 9px;
  height: 16px;
  display: flex;
  justify-content: center;
  gap: 20px;
  border: 2px solid ${edge};
  background: #d8d8d8;
`;
const SplitButton = styled.button`
  display: flex;
  align-items: center;
  justify-content: center;
  width: 48px;
  border: 2px solid ${edge};
  border-width: 0 2px;
  background: #c3c3c3;
`;
const ToolboxArea = styled.div`
  display: grid;
  grid-template-columns: minmax(0, 1fr) 8px;
  column-gap: 2px;
`;
const ToolColumn = styled(Column)`
  background: #f0f0f0;
`;
const EdgeStrip = styled.div`
  display: flex;
  flex-direction: column;
  gap: 6px;
  background: #a8a8a8;
`;
const EdgeTab = styled.div<{ $h: number; $mark?: string }>`
  height: ${p => p.$h}px;
  border: 2px solid #777;
  border-right: 0;
  background: ${p => (p.$mark ? `linear-gradient(${p.$mark}, ${p.$mark}) 3px 26px / 3px 8px no-repeat` : 'none')} #d8d8d8;
  &:first-child { border-top: 0; border-left: 0; background: #ebebeb; }
`;

/* ---------- task bar ---------- */
const TaskBar = styled.footer`
  flex: none;
  height: 17px;
  overflow: hidden;
  display: flex;
  align-items: flex-start;
  gap: 6px;
  padding-top: 8px;
  background: #1a1a1a;
  color: #fff;
`;
const Portal = styled.button`
  width: 305px;
  padding-left: 56px;
  text-align: left;
  font-size: 28px;
  line-height: 38px;
  color: #fff;
`;
const Task = styled.button<{ $on?: boolean }>`
  width: 226px;
  height: 36px;
  display: flex;
  align-items: center;
  gap: 12px;
  padding-left: 8px;
  background: ${p => (p.$on ? '#fff' : '#c3c3c3')};
  font-weight: ${p => (p.$on ? 700 : 400)};
`;
const Status = styled.div`
  width: 672px;
  display: flex;
  gap: 22px;
  white-space: nowrap;
`;
const StatusIcon = styled.div`
  width: 40px;
  height: 36px;
  background: #c9c9c9;
`;
const Watermark = styled.div`
  position: absolute;
  right: 16px;
  bottom: 6px;
  font: 14px/16px "Liberation Sans", sans-serif;
  color: #8a8a8a;
`;

const keys = ['F1', 'F2', 'F3', 'F4', 'F5', 'F6', 'F7', 'F8'];
const nav = ['手动控制', '自动控制', '系统查看', '变频器', '报警信息'];
const rows: [string, string][] = [
  ['¶变频器¶', 'H_02手动画面\\画面对象_6\\OFF 状态文本'],
  ['¶手动¶控制', 'H_02手动画面\\画面对象_6\\ON 状态文本'],
  ['¶手动¶控制', 'H_02手动画面\\画面对象_1\\ON 状态文本'],
  ['', 'H_02手动画面\\画面对象_1\\OFF 状态文本'],
];

const ProjectColumn = () => (
  <Column>
    <Bar $pad="0 18px 0 10px">
      <IconButton aria-label="new group">
        <I16><path d="M.5 14.500V1.500H5L6.500 3H8M15 9V14.500H.5" fill="#ddd" stroke="#999" /><g fill="#555"><rect x="3" y="5" width="3" height="2" /><rect x="9" y="7" width="3" height="2" /><rect x="9" y="10.500" width="3" height="2" /></g><path d="M5 6V12H9" stroke="#555" fill="none" /><path d="M12 0V8M8 4H16M9 1L15 7M15 1L9 7" stroke="#8a8a8a" /></I16>
      </IconButton>
      <Spacer />
      <DotRule $gap={8} />
      <ToolGroup>
        <IconButton $active aria-label="details">
          <svg width="32" height="30" viewBox="0 0 32 30"><rect x="2" y="1" width="28" height="27" fill="url(#page)" stroke="#98a4cc" strokeWidth="2" /><path d="M2 5H30M2 24H30" stroke="#7d8ab0" strokeWidth="2" /><path d="M6 10H26M6 15H26M6 20H26" stroke="#39426c" strokeWidth="2" strokeDasharray="5 2" /></svg>
        </IconButton>
        <Tool aria-label="export">
          <svg width="32" height="30" viewBox="2 0 32 30"><rect x="1" y="6" width="23" height="22" fill="#fff" stroke="#7080c0" strokeWidth="2" /><rect x="0" y="5" width="25" height="4" fill="#0c3c6c" /><path d="M4 14H22M4 20H22M4 25H22" stroke="#e8963a" strokeWidth="4" strokeDasharray="4 3" /><path d="M12 2C20 -2 27 2 28 9H32L25 18L17 9H21C21 5 18 2 12 2Z" fill="#1f8a2a" /></svg>
        </Tool>
      </ToolGroup>
    </Bar>
    <Strip $h={42} $bg={track} />
    <TreeArea>
      <Tree>
        {nodes.map(n => (
          <TreeRow key={n.k + n.t} $level={n.l} $dark={n.d} $sel={n.s} $bold={n.b}>
            <Twist>{(n.o || n.c) && <Triangle open={n.o} />}</Twist>
            <TreeIcon kind={n.k} />
            <TreeLabel>{n.t}</TreeLabel>
            <TreeEnd />
          </TreeRow>
        ))}
      </Tree>
      <VBar>
        <ScrollButton aria-label="up"><Arrow dir="up" /></ScrollButton>
        <VThumb $grow={336}><GripV /></VThumb>
        <Rest $grow={552} />
        <ScrollButton aria-label="down"><Arrow dir="down" /></ScrollButton>
      </VBar>
    </TreeArea>
    <HRow>
      <HBar>
        <ScrollButton aria-label="left"><Arrow dir="left" /></ScrollButton>
        <HThumb $grow={425}><GripH /></HThumb>
        <Rest $grow={8} />
        <ScrollButton aria-label="right"><Arrow dir="right" /></ScrollButton>
      </HBar>
      <Corner />
    </HRow>
    <Divider />
    <Head title="详细视图" />
    <Strip $h={50} $bg="#cbcbcb" $line />
    <Strip $h={54} $bg="#ebebeb" />
    <Clip>
      <DetailGrid>
        <colgroup><col width="36" /><col width="320" /><col /></colgroup>
        <thead><tr><th /><th>名称</th><th /></tr></thead>
        <tbody>{[0, 1, 2, 3, 4, 5].map(i => <tr key={i}><td colSpan={3} /></tr>)}</tbody>
      </DetailGrid>
    </Clip>
  </Column>
);

const EditorColumn = () => (
  <Column>
    <Bar $pad="0 12px">
      <ComboPair>
        <Combo $w={224} $btn={30}>
          <ComboInput aria-label="font" />
          <ComboButton aria-label="font list"><svg width="18" height="26" viewBox="0 0 18 26"><rect x="1" y="1" width="16" height="24" fill="#fff" stroke="#aaa" /><path d="M4 7H14M4 12H14M4 17H14M4 21H14" stroke="#555" strokeWidth="2" /></svg></ComboButton>
        </Combo>
        <Combo $w={76} $btn={31}>
          <ComboInput aria-label="size" />
          <ComboButton aria-label="size list"><Down color="#888" /></ComboButton>
        </Combo>
      </ComboPair>
      <Letters>
        {['B', 'I', 'U', 'S'].map(k => <Letter key={k} $kind={k}>{k}</Letter>)}
      </Letters>
      <ToolSet names={['grow', 'align']} />
      <DotRule $gap={11} />
      <ToolSet names={['color', 'fill', 'pen']} dark="fill" />
      <DotRule />
      <ToolSet names={['width', 'style']} />
      <DotRule />
      <ToolSet names={['order', 'rotate', 'center', 'spread', 'size']} />
      <DotRule />
      <ToolGroup>
        <Tool aria-label="brush">{toolIcons.brush}</Tool>
        <Tool aria-label="layer">{toolIcons.layer}<More /></Tool>
        <Tool aria-label="region">{toolIcons.region}</Tool>
      </ToolGroup>
    </Bar>
    <CanvasRow>
      <Canvas>
        <PanelRow>
          <Hatch>
            <Panel>
              <PanelTop>
                <LogoArc><LogoSvg /></LogoArc>
                <PanelTitle>手动画面</PanelTitle>
                <Clock>10:59:39</Clock>
              </PanelTop>
              <Rule />
              <Block>
                <SideLabel $gap={61}><span>货</span><span>叉</span></SideLabel>
                <Cells>
                  {[0, 1, 2, 3, 4].map(i => <Cell key={i} $top><Lamp /></Cell>)}
                  <Cell><CellButton>货叉一叉左2</CellButton></Cell>
                  <Cell><CellButton>货叉一叉左1</CellButton></Cell>
                  <Cell>中位</Cell>
                  <Cell><CellButton>货叉一叉右1</CellButton></Cell>
                  <Cell><CellButton>货叉一叉右2</CellButton></Cell>
                </Cells>
              </Block>
              <MessageRow><Message>运行位置货叉动作被锁定</Message></MessageRow>
              <Block>
                <SideLabel $gap={13}><span>堆</span><span>垛</span><span>机</span></SideLabel>
                <ModeCells>
                  <ModeCell>
                    <ModeLabel htmlFor="mode">当前运行模式</ModeLabel>
                    <ModeValue id="mode">定位运行模式</ModeValue>
                  </ModeCell>
                  {['定位运行', '前进', '后退', '上升', '下降'].map((t, i) => (
                    <Cell key={t}><CellButton $on={i === 0}>{t}</CellButton></Cell>
                  ))}
                </ModeCells>
              </Block>
              <NavRow>
                {nav.map((t, i) => <NavButton key={t} $on={i === 0}>{t}</NavButton>)}
                <NavButton $round aria-label="home"><House /></NavButton>
                <NavButton $round aria-label="power"><Power /></NavButton>
              </NavRow>
            </Panel>
          </Hatch>
          <Bezel><BezelArt /></Bezel>
        </PanelRow>
        <KeyRow>
          {keys.map(k => <KeyCap key={k}><KeyFace>{k}</KeyFace></KeyCap>)}
        </KeyRow>
      </Canvas>
      <VBar $w={34}>
        <ScrollButton aria-label="up"><Arrow dir="up" size={16} /></ScrollButton>
        <Rest $grow={220} />
        <VThumb $grow={720}><GripV /></VThumb>
        <Rest $grow={78} />
        <ScrollButton aria-label="down"><Arrow dir="down" size={16} /></ScrollButton>
      </VBar>
    </CanvasRow>
    <Footer>
      <HBar>
        <ScrollButton aria-label="left"><Arrow dir="left" size={16} /></ScrollButton>
        <Rest $grow={96} />
        <HThumb $grow={912}><GripH /></HThumb>
        <Rest $grow={118} />
        <ScrollButton aria-label="right"><Arrow dir="right" size={16} /></ScrollButton>
      </HBar>
      <ZoomCombo $w={310} $btn={28}>
        <ComboSelect aria-label="zoom"><option>100%</option></ComboSelect>
        <ComboButton aria-label="zoom list"><Down /></ComboButton>
      </ZoomCombo>
      <ZoomBox>
        <Range type="range" aria-label="zoom level" defaultValue={32} />
        <Ticks />
      </ZoomBox>
      <Fit aria-label="fit"><svg width="26" height="26" viewBox="0 0 26 26"><rect x="6" y="1" width="18" height="22" fill="#b9c8f8" stroke="#1a2a80" strokeWidth="2" /><rect x="1" y="5" width="13" height="12" fill="#4a6cf8" stroke="#0a30e0" strokeWidth="2" /></svg></Fit>
    </Footer>
    <Divider />
    <InspectorHead>
      <InspectorTitle>H_02手动画面 [画面]</InspectorTitle>
      <TopTab $on $w={154} $gap={12}>
        <I16><Page><path d="M3 4H9M3 7H7M3 10H6" stroke="#667" /></Page><circle cx="9" cy="7" r="3.5" fill="#dde6ff" stroke="#333a70" /><path d="M11 10L15 15" stroke="#2b62b0" strokeWidth="2" /><path d="M11 10L13 12" stroke="#f0a020" strokeWidth="2" /></I16>
        属性
      </TopTab>
      <TopTab $w={164} $gap={12}>
        <I16><g transform="translate(2 0)"><Page /></g><path d="M0 3H4M3 1L6 3.500L3 6ZM10 12.500H14M13 10L16 12.500L13 15Z" fill="#0a0a50" stroke="#0a0a50" /><path d="M8 3V5M6.500 7.500H8.500V12.500" stroke="#0a0a50" strokeWidth="2" fill="none" /></I16>
        信息
        <svg width="28" height="28" viewBox="0 0 28 28"><circle cx="14" cy="14" r="13" fill="#ffe600" stroke="#d8a800" strokeWidth="2" /><path d="M14 6V10M11 12.500H15V21M11 21.500H18" stroke="#222" strokeWidth="3" fill="none" /></svg>
      </TopTab>
      <TopTab $w={154} $gap={12}>
        <I16><rect x="2" y=".5" width="12" height="15" fill="url(#page)" stroke="#a0aad8" /><Steth /></I16>
        诊断
      </TopTab>
      <WindowTools>
        <IconButton aria-label="float"><svg width="26" height="24" viewBox="0 0 26 24"><path d="M8 0H24V16H18V6H8Z" fill="#fff" /><path d="M1 8H16V23H1Z" fill="#fff" /></svg></IconButton>
        <IconButton aria-label="dock"><svg width="24" height="24" viewBox="0 0 24 24"><path d="M1 1H23M1 6H23M1 11H23" stroke="#d2d2d2" strokeWidth="2" /><rect x="2" y="15" width="20" height="7" fill="none" stroke="#fff" strokeWidth="3" /></svg></IconButton>
        <IconButton aria-label="collapse"><svg width="24" height="14" viewBox="0 0 24 14"><path d="M0 0H24L12 14Z" fill="#fff" /></svg></IconButton>
      </WindowTools>
    </InspectorHead>
    <SubTabs>
      <SubTab>属性</SubTab><SubTab>动画</SubTab><SubTab>事件</SubTab><SubTab $on>文本</SubTab>
    </SubTabs>
    <Bar $pad="0 14px 4px">
      <ToolGroup>
        <Tool aria-label="export text"><I16><Page><path d="M2 4H8M2 6H8M2 10H8M2 12H8" stroke="#556" /></Page><path d="M4 7.500H12M11 3.500L16 7.500L11 11.500Z" fill="#0a0a50" stroke="#0a0a50" /></I16></Tool>
        <Tool aria-label="import text"><I16><Page><path d="M2 4H8M2 6H6M2 10H6M2 12H8" stroke="#556" /></Page><path d="M16 7.500H7M9 3.500L4 7.500L9 11.500Z" fill="#0a0a50" stroke="#0a0a50" /></I16></Tool>
      </ToolGroup>
    </Bar>
    <TableArea>
      <TextGrid>
        <colgroup><col width="48" /><col width="400" /><col width="900" /><col /></colgroup>
        <thead>
          <tr>
            <th />
            <th><LangHead><svg width="30" height="30" viewBox="0 0 30 30"><circle cx="15" cy="15" r="14" fill="url(#globe)" /><path d="M8 6L14 5L16 12L11 14ZM17 14L23 12L21 22L16 21Z" fill="#a9c0ff" opacity=".7" /></svg>中文（中华人民共和国）</LangHead></th>
            <th>引用</th>
            <th />
          </tr>
        </thead>
        <tbody>
          {rows.map(([a, b], i) => (
            <tr key={i}>
              <td />
              <td>{i === 0 ? <CellInput aria-label="text" defaultValue={a} /> : a}</td>
              <td>{b}</td>
              <td />
            </tr>
          ))}
        </tbody>
      </TextGrid>
      <ScrollSide>
        <ScrollCap />
        <VBar>
          <ScrollButton aria-label="up"><Arrow dir="up" size={18} /></ScrollButton>
          <ScrollButton as="div"><GripV /></ScrollButton>
          <Strip $h={8} $bg={track} />
          <ScrollButton aria-label="down"><Arrow dir="down" size={18} /></ScrollButton>
        </VBar>
      </ScrollSide>
    </TableArea>
  </Column>
);

const Toolbox = () => (
  <ToolColumn>
    <Bar $pad="0 10px 0 16px" $gap={14}>
      <ToolGroup>
        <Tool aria-label="select"><T><path d="M8 1V25L13 20L17 29L21 27L17 18H24Z" fill="#0a0a50" /></T></Tool>
        <Tool aria-label="stamp"><T><circle cx="16" cy="8" r="7" fill="url(#gold)" /><path d="M13 14H19L20 22H28V28H3V22H12Z" fill="url(#gold)" /></T></Tool>
        <Tool aria-label="settings"><T><rect x="2" y="4" width="16" height="24" fill="#f4f4f4" stroke="#999" strokeWidth="2" /><path d="M6 9H14M6 13H14M6 21H14M6 25H14" stroke="#555" strokeWidth="2" /><path d={wrench} transform="translate(6 -1) scale(1.800 1.900)" fill="#8a8a8a" /></T></Tool>
        <Tool aria-label="table"><T><rect x="2" y="2" width="28" height="27" fill="#eef1ff" stroke="#38548c" strokeWidth="2" /><rect x="1" y="1" width="30" height="4" fill="#0c3c6c" /><path d="M4 9H28M4 14H28M4 19H28M4 24H28" stroke="#556" strokeWidth="2" strokeDasharray="6 3" /></T></Tool>
      </ToolGroup>
      <Combo $w={240} $btn={30}>
        <ComboSelect aria-label="style"><option>深色默认值</option></ComboSelect>
        <ComboButton aria-label="style list"><Down /></ComboButton>
      </Combo>
      <Spacer />
      <IconButton aria-label="window"><svg width="30" height="28" viewBox="0 0 30 28"><rect x="1" y="1" width="27" height="26" fill="url(#page)" stroke="#8fa0ee" strokeWidth="2" /><path d="M1 5H28M1 23H28" stroke="#7d8ab0" strokeWidth="2" /></svg></IconButton>
    </Bar>
    <Head title="基本对象" bar />
    <Palette>
      <P><path d="M7 50L50 5" stroke="#3a56f0" strokeWidth="2.500" /></P>
      <P><ellipse cx="28" cy="28" rx="27" ry="15" fill="url(#soft)" stroke="#4a62ea" strokeWidth="2" /></P>
      <P><circle cx="28" cy="28" r="27" fill="url(#soft)" stroke="#3c56e0" strokeWidth="2" /></P>
      <P><rect x="1" y="7" width="54" height="42" fill="url(#soft)" stroke="#4a62ea" strokeWidth="2" /></P>
      <P><path d="M13 48L27 11H29L43 48M18 35H38" fill="none" stroke="#0a0a50" strokeWidth="4" /></P>
      <P><Picture /></P>
    </Palette>
    <Head title="元素" bar />
    <Palette>
      <P><rect x="1" y="13" width="54" height="30" fill="#ccc" stroke="#555" strokeWidth="2" /><path d="M0 43H56" stroke="#000" strokeWidth="3" /><text x="28" y="38" fontSize="27" fontWeight="700" fontFamily="Liberation Sans, sans-serif" textAnchor="middle" fill="#111">0.12</text></P>
      <P><rect x="1" y="13" width="54" height="30" fill="url(#grey)" stroke="#fff" strokeWidth="2" /><path d="M0 43H55V12" fill="none" stroke="#000" strokeWidth="3" /></P>
      <P><rect x="1" y="13" width="54" height="30" fill="url(#page)" stroke="#8fa0ee" strokeWidth="2" /><path d="M0 43H31" stroke="#4b62d6" strokeWidth="3" /><rect x="31" y="13" width="24" height="30" fill="url(#grey)" stroke="#777" strokeWidth="2" /><path d="M36 25H50L43 33Z" /><text x="16" y="37" fontSize="24" fontWeight="700" fontFamily="Liberation Sans, sans-serif" textAnchor="middle" fill="#0a0a50">10</text></P>
      <P><Picture w={38} /><rect x="39" y="3" width="16" height="50" fill="url(#grey)" stroke="#888" strokeWidth="2" /><rect x="40" y="4" width="14" height="11" fill="#eee" /><rect x="40" y="40" width="14" height="11" fill="#eee" /><path d="M42 12H52L47 6ZM42 43H52L47 49Z" /></P>
      <P><rect x="23" y="12" width="33" height="40" fill="url(#page)" stroke="#8fa0ee" /><rect x="22" y="12" width="34" height="8" fill="#3347e8" /><path d="M22 51H56" stroke="#0a0ab0" strokeWidth="4" /><text x="39" y="46" fontSize="32" fontFamily="Noto Sans, sans-serif" textAnchor="middle" fill="#0a0a50">5</text><circle cx="15" cy="15" r="14" fill="#eaf1ff" stroke="#6d84ee" strokeWidth="2" /><path d="M15 7V17H22" fill="none" stroke="#0a0a50" strokeWidth="2" /></P>
      <P><rect x="6" y="2" width="26" height="36" fill="url(#blue)" opacity=".85" /><rect x="6" y="37" width="26" height="16" fill="#2f9a50" /><path d="M36 3H50M36 13H50M36 23H50M36 33H50M36 43H50M36 53H50" stroke="#888" strokeWidth="2" /></P>
      <P><rect x="1" y="3" width="54" height="50" fill="url(#grey)" stroke="#888" strokeWidth="2" /><path d="M0 52H56" stroke="#555" strokeWidth="3" /><rect x="7" y="26" width="42" height="21" fill="#ddd" stroke="#888" strokeWidth="2" /><rect x="8" y="27" width="19" height="18" fill="#8fb4ff" /><path d="M28 26V47" stroke="#000" strokeWidth="2" /><rect x="8.500" y="9" width="7" height="12" fill="none" stroke="#111" strokeWidth="2" /><path d="M46 8V22" stroke="#111" strokeWidth="2" /></P>
    </Palette>
    <Head title="控件" bar />
    <Palette>
      <P><rect x="1" y="3" width="32" height="18" fill="#e9edff" stroke="#6d84ee" strokeWidth="2" /><path d="M2 4L17 15L32 4" fill="none" stroke="#6d84ee" strokeWidth="2" /><path d="M33 12L55 53H11Z" fill="#ffee00" stroke="#e0b000" strokeWidth="2" /><path d="M33 20V39M33 43V48" stroke="#0a0a50" strokeWidth="6" /></P>
      <P><rect x="1" y="3" width="54" height="50" fill="url(#page)" stroke="#8fa0ee" strokeWidth="2" /><path d="M0 53H56" stroke="#5a6ee0" strokeWidth="3" /><path d="M20 8V44M30 8V44M40 8V44M10 22H48M10 33H48" stroke="#ccd3ea" strokeWidth="2" /><path d="M9 8V45H48" fill="none" stroke="#000" strokeWidth="4" /><path d="M12 28L22 18L34 20L47 9" fill="none" stroke="#c32ee8" strokeWidth="3" /></P>
      <P><circle cx="14" cy="5" r="6" fill="#0a0a40" /><circle cx="14" cy="9" r="4" fill="#f3c08a" /><path d="M4 16H24V37H20V57H8V37H4Z" fill="#1f6098" /><circle cx="41" cy="20" r="12" fill="url(#gold)" stroke="#a47c14" strokeWidth="2" /><circle cx="41" cy="15" r="3" fill="#f0f0f0" /><path d="M38 31H45V54L41 57L37 52L40 47L37 42Z" fill="url(#gold)" stroke="#a47c14" /></P>
      <P><rect x="1" y="3" width="52" height="42" fill="url(#page)" stroke="#8fa0ee" strokeWidth="2" /><rect x="0" y="2" width="54" height="7" fill="#0c3c6c" /><path d="M8 5H52" stroke="#fff" strokeWidth="2" /><path d="M0 45H30" stroke="#0c3c6c" strokeWidth="3" /><circle cx="37" cy="37" r="18" fill="#dbe8ff" stroke="#2b5cb0" strokeWidth="3" /><path d="M37 19V55M19 37H55M23 28H51M23 46H51" stroke="#2b5cb0" strokeWidth="2" /><ellipse cx="37" cy="37" rx="9" ry="18" fill="none" stroke="#2b5cb0" strokeWidth="2" /></P>
      <P><rect x="12" y="3" width="41" height="28" fill="#e6f8fc" stroke="#3f9fc0" strokeWidth="2" /><rect x="8" y="9" width="41" height="24" fill="#e6f8fc" stroke="#3f9fc0" strokeWidth="2" /><rect x="4" y="15" width="41" height="20" fill="#f2fcff" stroke="#3f9fc0" strokeWidth="2" /><path d="M0 32H46V53H0Z" fill="url(#blue)" /><path d="M46 32L56 25V44L46 53Z" fill="#0c0ca0" /><rect x="16" y="36" width="14" height="6" fill="#fff" /></P>
      <P><rect x="1" y="3" width="54" height="50" fill="url(#page)" stroke="#8fa0ee" strokeWidth="2" /><path d="M0 53H56" stroke="#5a6ee0" strokeWidth="3" /><path d="M14 8H11V22Q11 30 20 30Q29 30 29 22V8H26M20 30V36Q20 47 30 47Q39 46 41 36" fill="none" stroke="#222" strokeWidth="3" /><circle cx="40" cy="35" r="4" fill="#8fb0e8" stroke="#333" strokeWidth="2" /></P>
    </Palette>
    <Head title="图形" bar />
    <Bar $pad="0 14px 4px" $h={50} $gap={16}>
      <Tool aria-label="add folder"><I16><FolderBase /><rect x="0" y="9" width="7" height="7" fill="#fff" /><path d="M1 15L5 11M2 10.500H5.500V14" stroke="#0a0a50" strokeWidth="1.500" fill="none" /><Spark /></I16></Tool>
      <Tool aria-label="remove folder"><I16><path d="M.5 14V.8H5L6.500 2.500H15V14Z" fill="#e6e6e6" stroke="#aaa" /><rect x="0" y="9" width="7" height="7" fill="#f4f4f4" /><path d="M1 15L5 11M2 10.500H5.500V14" stroke="#444" strokeWidth="1.500" fill="none" /><path d="M9 8L16 15M16 8L9 15" stroke="#555" strokeWidth="2" /></I16></Tool>
    </Bar>
    <FileList>
      <FileRow>
        <FileTwist><Triangle /></FileTwist>
        <I16><FolderBase /><rect x="0" y="9" width="6" height="7" fill="#fff" /><path d="M1 15L4.500 11M2 10.500H5V14" stroke="#0a0a50" strokeWidth="1.500" fill="none" /><rect x="9" y="6" width="7" height="6" fill="#7c8cc0" stroke="#39426c" /><path d="M8 14.500H16" stroke="#39426c" strokeWidth="2" /></I16>
        <FileName $sel><Latin>WinCC</Latin> 图形文件夹</FileName>
      </FileRow>
      <FileRow>
        <FileTwist />
        <I16><FolderBase /><rect x="0" y="9" width="6" height="7" fill="#fff" /><path d="M1 15L4.500 11M2 10.500H5V14" stroke="#0a0a50" strokeWidth="1.500" fill="none" /><circle cx="12.500" cy="2" r="2" fill="#0a0a40" /><path d="M10 4H16V15H11Z" fill="#1f6cae" /></I16>
        <FileName>我的图形文件夹</FileName>
      </FileRow>
      <FileRow /><FileRow /><FileRow />
    </FileList>
    <Splitter>
      <SplitButton aria-label="grow"><svg width="12" height="6" viewBox="0 0 12 6"><path d="M0 6H12L6 0Z" /></svg></SplitButton>
      <SplitButton aria-label="shrink"><svg width="12" height="6" viewBox="0 0 12 6"><path d="M0 0H12L6 6Z" /></svg></SplitButton>
    </Splitter>
  </ToolColumn>
);

export default function App() {
  return (
    <Shell>
      <Global />
      <Gradients />
      <Workspace>
        <ProjectColumn />
        <EditorColumn />
        <ToolboxArea>
          <Toolbox />
          <EdgeStrip>
            <EdgeTab $h={139} />
            <EdgeTab $h={151} $mark="#b030e8" />
            <EdgeTab $h={151} $mark="#c89020" />
            <EdgeTab $h={304} $mark="#78b0d8" />
            <EdgeTab $h={120} $mark="#24307c" />
            <EdgeTab $h={126} />
          </EdgeStrip>
        </ToolboxArea>
      </Workspace>
      <TaskBar>
        <Portal>Portal 视图</Portal>
        <Task><I16 size={28}><rect x="0" y="1" width="16" height="14" fill="#0c3c6c" /><path d="M3 3H14" stroke="#fff" strokeDasharray="1 1" /></I16>总览</Task>
        <Task><I16 size={28}><rect x="0" y="1" width="16" height="14" fill="#4d5a80" /></I16>H_01起始画面</Task>
        <Task $on><I16 size={28}><rect x="0" y="1" width="16" height="14" fill="#4d5a80" /></I16>H_02手动画面</Task>
        <Spacer />
        <Status>
          <StatusIcon />
          <svg width="24" height="24" viewBox="0 0 24 24"><circle cx="12" cy="16" r="12" fill="#1010f0" /></svg>
          <span>项目 DLDL堆垛机程序_V15.1_V16_V17 已打开。</span>
        </Status>
      </TaskBar>
      <Watermark>CSDN @!chen</Watermark>
    </Shell>
  );
}
